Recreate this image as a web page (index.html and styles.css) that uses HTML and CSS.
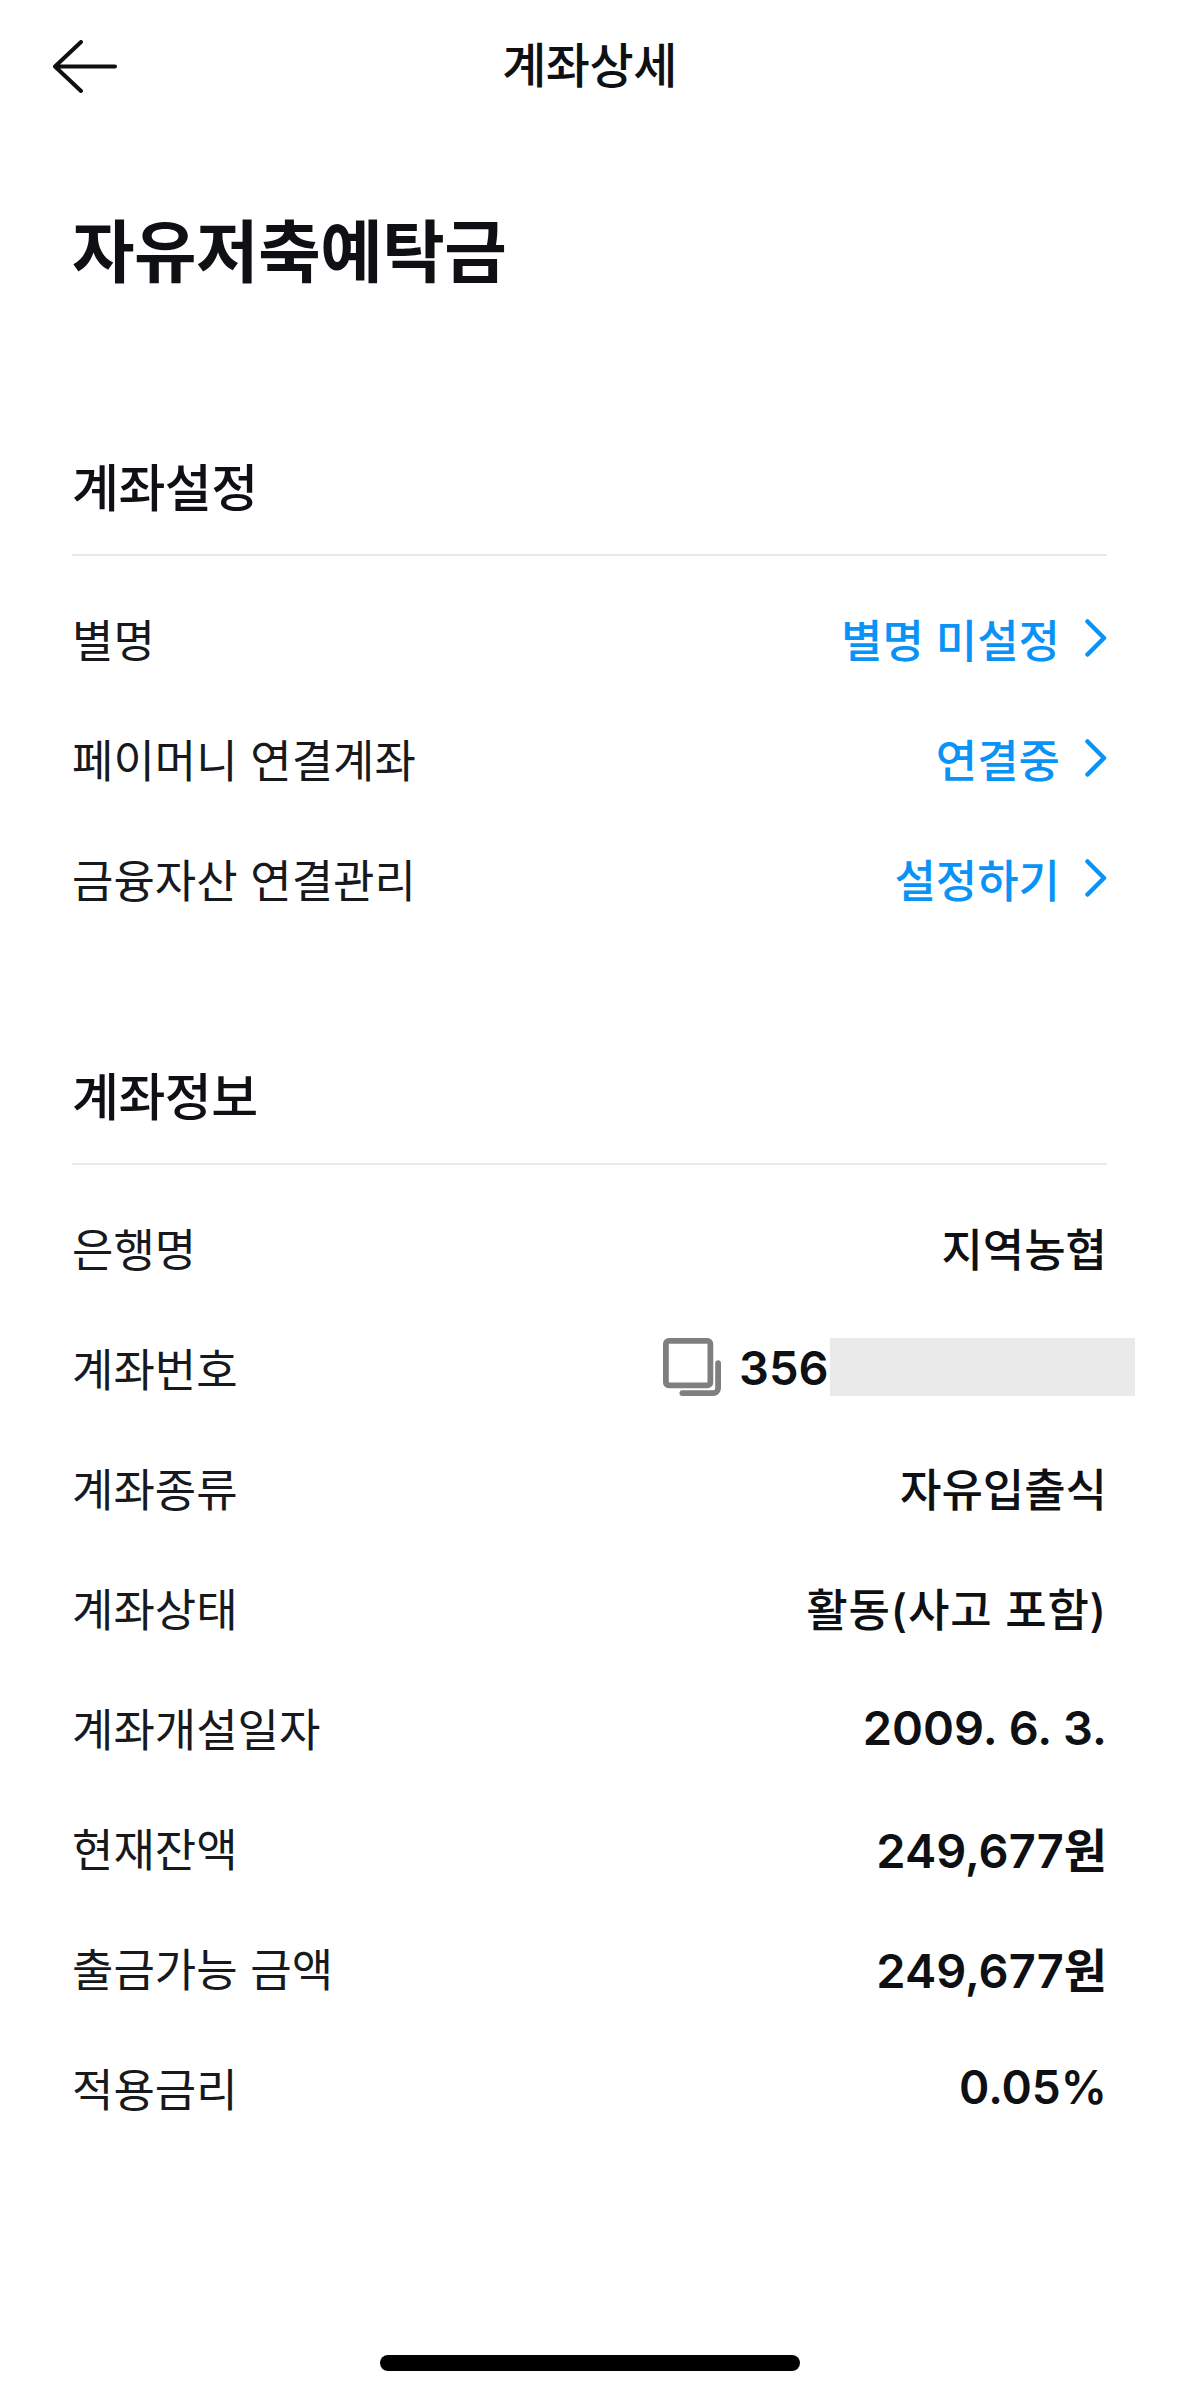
FILE: index.html
```html
<!DOCTYPE html>
<html lang="ko">
<head>
<meta charset="utf-8">
<title>계좌상세</title>
<link rel="stylesheet" href="styles.css">
</head>
<body>
<div class="screen">
  <header class="topbar">
    <svg class="back" viewBox="0 0 64 54" aria-hidden="true"><path d="M28 2 2 26.500 28 51M2 26.500H62"/></svg>
    <h1 class="topbar-title">계좌상세</h1>
  </header>
  <h2 class="product">자유저축예탁금</h2>

  <section class="settings">
    <h3 class="section-title">계좌설정</h3>
    <ul class="rows">
      <li class="row"><span class="label">별명</span><span class="link">별명 미설정<svg class="chev" viewBox="0 0 22 38"><path d="M2.500 2.500 19 19 2.500 35.500"/></svg></span></li>
      <li class="row"><span class="label">페이머니 연결계좌</span><span class="link">연결중<svg class="chev" viewBox="0 0 22 38"><path d="M2.500 2.500 19 19 2.500 35.500"/></svg></span></li>
      <li class="row"><span class="label">금융자산 연결관리</span><span class="link">설정하기<svg class="chev" viewBox="0 0 22 38"><path d="M2.500 2.500 19 19 2.500 35.500"/></svg></span></li>
    </ul>
  </section>

  <section class="info">
    <h3 class="section-title">계좌정보</h3>
    <ul class="rows">
      <li class="row"><span class="label">은행명</span><span class="value">지역농협</span></li>
      <li class="row"><span class="label">계좌번호</span><span class="value num account">
        <svg class="copy" viewBox="0 0 60 60" aria-hidden="true"><rect x="3" y="3" width="46" height="46" rx="3"/><path d="M57 26V52a5 5 0 0 1-5 5H20"/></svg>
        <span class="acct-num">356</span><span class="mask"></span></span></li>
      <li class="row"><span class="label">계좌종류</span><span class="value">자유입출식</span></li>
      <li class="row"><span class="label">계좌상태</span><span class="value wide">활동(사고 포함)</span></li>
      <li class="row"><span class="label">계좌개설일자</span><span class="value num">2009. 6. 3.</span></li>
      <li class="row"><span class="label">현재잔액</span><span class="value num">249,677원</span></li>
      <li class="row"><span class="label">출금가능 금액</span><span class="value num">249,677원</span></li>
      <li class="row"><span class="label">적용금리</span><span class="value num pct">0.05%</span></li>
    </ul>
  </section>

  <div class="home-bar"></div>
</div>
</body>
</html>
```
FILE: styles.css
```css
* { box-sizing: border-box; }
html, body { margin: 0; padding: 0; background: #fff; }
body {
  font-family: Inter, "Noto Sans CJK KR", "Noto Sans", sans-serif;
  color: #0e1013;
}
.screen {
  width: 1179px;
  height: 2396px;
  padding: 0 72px;
  display: flex;
  flex-direction: column;
  overflow: hidden;
}
.topbar {
  height: 132px;
  padding-bottom: 8px;
  display: flex;
  align-items: center;
  justify-content: center;
  position: relative;
}
.back {
  position: absolute;
  left: -19px;
  top: 40px;
  width: 64px;
  height: 54px;
  fill: none;
  stroke: #0e1013;
  stroke-width: 4;
  stroke-linecap: round;
  stroke-linejoin: round;
}
.topbar-title {
  margin: 0;
  font-size: 48px;
  font-weight: 500;
  letter-spacing: -0.5px;
}
.product {
  margin: 70px 0 0;
  font-size: 68px;
  line-height: 100px;
  font-weight: 700;
  letter-spacing: -0.5px;
}
.settings { margin-top: 158px; }
.info { margin-top: 131px; }
.section-title {
  margin: 0;
  height: 96px;
  line-height: 58px;
  font-size: 51px;
  font-weight: 500;
  letter-spacing: -0.5px;
  border-bottom: 2px solid #e9eaeb;
}
.rows {
  list-style: none;
  margin: 0;
  padding: 22px 0 0;
}
.row {
  height: 120px;
  display: flex;
  align-items: center;
  justify-content: space-between;
}
.label {
  font-size: 45px;
  font-weight: 400;
  color: #17191c;
}
.link {
  display: flex;
  align-items: center;
  font-size: 45px;
  font-weight: 500;
  color: #0a93f7;
}
.chev {
  width: 22px;
  height: 38px;
  margin-left: 25px;
  fill: none;
  stroke: #0a93f7;
  stroke-width: 4.500;
  stroke-linecap: round;
  stroke-linejoin: round;
}
.value {
  font-size: 45px;
  font-weight: 500;
  color: #0e1013;
}
.num { font-size: 47px; font-weight: 600; }
.pct { font-size: 46px; }
.wide { letter-spacing: 0.8px; }
.account {
  display: flex;
  align-items: center;
  margin-right: -28px;
}
.copy {
  width: 58px;
  height: 58px;
  margin-right: 18px;
  fill: none;
  stroke: #7f7f7f;
  stroke-width: 6;
  stroke-linecap: round;
  stroke-linejoin: round;
}
.acct-num { width: 91px; }
.mask {
  width: 305px;
  height: 58px;
  background: #eaeaea;
}
.home-bar {
  position: absolute;
  left: 380px;
  top: 2355px;
  width: 420px;
  height: 16px;
  border-radius: 8px;
  background: #000;
}
```
